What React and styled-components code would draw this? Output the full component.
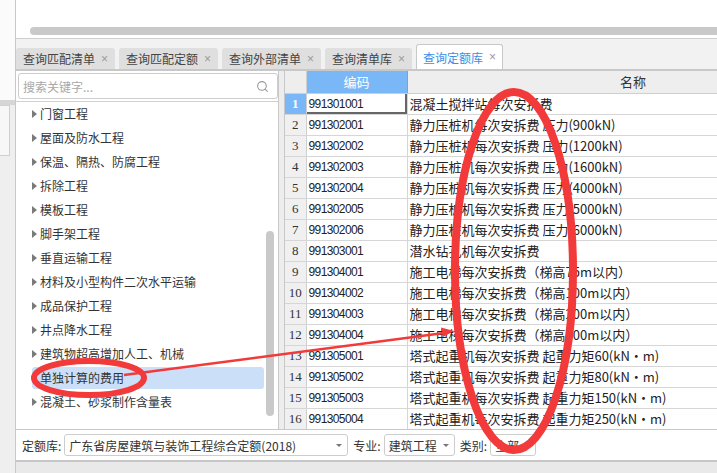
import styled, { createGlobalStyle } from "styled-components";
import { Search } from "lucide-react";

const GlobalStyle = createGlobalStyle`
  html, body {
    margin: 0;
    padding: 0;
    background: #f0f0f0;
  }
  * {
    box-sizing: border-box;
  }
  body {
    font-family: "Noto Sans CJK SC", "Liberation Sans", sans-serif;
    color: #333;
  }
`;

const Page = styled.div`
  position: relative;
  display: flex;
  width: 717px;
  height: 473px;
  overflow: hidden;
  background: #f0f0f0;
`;

const SideStrip = styled.div`
  display: flex;
  flex-direction: column;
  width: 16px;
  border-right: 1px solid #c8c8c8;
  background: #efefef;
`;

const SideTop = styled.div`
  height: 100px;
  background: #fbfbfb;
`;

const SideBand = styled.div`
  height: 5px;
  background: #d6d6d6;
`;

const SideBox = styled.div`
  height: 51px;
  width: 10px;
  border: 1px solid #cfcfcf;
  border-left: none;
  background: #f7f7f7;
`;

const Main = styled.div`
  flex: 1;
  display: flex;
  flex-direction: column;
  min-width: 0;
`;

const TopPanel = styled.div`
  height: 39px;
  background: #fff;
  border-bottom: 1px solid #cfcfcf;
  padding: 27px 0 0 14px;
`;

const HScroll = styled.div`
  height: 8px;
  background: #c9c9c9;
  border-radius: 4px 0 0 4px;
`;

const TabBar = styled.div`
  height: 30px;
  display: flex;
  align-items: flex-end;
  gap: 4px;
  background: #f2f2f2;
`;

const Tab = styled.div`
  display: flex;
  align-items: center;
  height: ${(p) => (p.$active ? "25px" : "21px")};
  padding: 0 ${(p) => (p.$active ? "6px" : "7px")};
  background: ${(p) => (p.$active ? "#fff" : "#dfdfdf")};
  border: ${(p) => (p.$active ? "1px solid #c8c8c8" : "none")};
  border-bottom: none;
  border-radius: 3px 3px 0 0;
  color: ${(p) => (p.$active ? "#3a8ee6" : "#444")};
  font-size: 12px;
  white-space: nowrap;
`;

const TabClose = styled.span`
  display: inline-block;
  width: 7px;
  margin-left: 6px;
  color: #9a9a9a;
  font-family: "Liberation Sans", sans-serif;
  font-size: 12px;
  line-height: 1;
`;

const Content = styled.div`
  display: flex;
  height: 360px;
  border-top: 2px solid #c8c8c8;
`;

const LeftPanel = styled.div`
  width: 263px;
  display: flex;
  flex-direction: column;
  background: #fff;
  border-right: 1px solid #c8c8c8;
`;

const SearchWrap = styled.div`
  padding: 2px 0 2px 2px;
  border-bottom: 1px solid #d0d0d0;
`;

const SearchBox = styled.div`
  display: flex;
  align-items: center;
  height: 26px;
  padding: 0 8px 0 4px;
  border: 1px solid #cdcdcd;
  border-radius: 3px;
  color: #a8a8a8;
  font-size: 12px;
`;

const SearchText = styled.span`
  flex: 1;
`;

const TreeArea = styled.div`
  flex: 1;
  display: flex;
`;

const TreeList = styled.div`
  flex: 1;
  display: flex;
  flex-direction: column;
  gap: 2px;
  padding: 1px 2px 0 16px;
`;

const TreeItem = styled.div`
  display: flex;
  align-items: center;
  height: 22px;
  border-radius: 3px;
  background: ${(p) => (p.$selected ? "#cbe0f8" : "transparent")};
  font-size: 12px;
  line-height: 22px;
  color: #333;
  white-space: nowrap;
`;

const Caret = styled.span`
  width: 5px;
  height: 8px;
  border-left: 5px solid ${(p) => (p.$hidden ? "transparent" : "#7a7a7a")};
  border-top: 4px solid transparent;
  border-bottom: 4px solid transparent;
  margin-right: 3px;
`;

const ScrollTrack = styled.div`
  width: 8px;
  margin-right: 4px;
`;

const ScrollThumb = styled.div`
  width: 8px;
  height: 185px;
  margin-top: 129px;
  border-radius: 4px;
  background: #c9c9c9;
`;

const Splitter = styled.div`
  width: 5px;
  background: #ededed;
`;

const TableWrap = styled.div`
  flex: 1;
  overflow: hidden;
  border-left: 1px solid #c8c8c8;
  background: #fff;
`;

const Grid = styled.table`
  border-collapse: collapse;
  table-layout: fixed;
  width: 574px;
`;

const HeadCell = styled.th`
  height: 22px;
  padding: 0;
  font-weight: normal;
  font-size: 13px;
  text-align: center;
  background: ${(p) => (p.$blue ? "#7ab7f6" : "#eeeeee")};
  color: ${(p) => (p.$blue ? "#fff" : "#333")};
  border-right: 1px solid ${(p) => (p.$blue ? "#6aa8ea" : "#d0d0d0")};
  border-bottom: 1px solid #cfcfcf;
`;

const RowHead = styled.td`
  height: 21px;
  padding: 0;
  text-align: center;
  font-family: "Liberation Serif", serif;
  font-size: 13px;
  font-weight: ${(p) => (p.$active ? "bold" : "normal")};
  background: ${(p) => (p.$active ? "#7ab7f6" : "#f0f0f0")};
  color: ${(p) => (p.$active ? "#fff" : "#333")};
  border-right: 1px solid #cfcfcf;
  border-bottom: 1px solid #d6d6d6;
`;

const CodeCell = styled.td`
  height: 21px;
  padding: 0 0 0 2px;
  font-family: "Liberation Sans", sans-serif;
  font-size: 12px;
  letter-spacing: -0.6px;
  color: #222;
  white-space: nowrap;
  border-right: 1px solid #d6d6d6;
  border-bottom: 1px solid #d6d6d6;
  box-shadow: ${(p) => (p.$selected ? "inset -2px -2px 0 #666" : "none")};
`;

const NameCell = styled.td`
  height: 21px;
  padding: 0 0 0 2px;
  font-size: 13px;
  color: #222;
  white-space: nowrap;
  overflow: hidden;
  border-bottom: 1px solid #d6d6d6;
`;

const BottomBar = styled.div`
  display: flex;
  align-items: center;
  height: 31px;
  padding-left: 6px;
  background: #fff;
  border-top: 1px solid #c8c8c8;
  font-size: 12px;
  color: #333;
`;

const Label = styled.span`
  margin-right: 3px;
  white-space: nowrap;
`;

const Select = styled.div`
  display: flex;
  align-items: center;
  width: ${(p) => p.$width}px;
  height: 22px;
  margin-right: 5px;
  padding: 0 5px 0 4px;
  border: 1px solid #cdcdcd;
  border-radius: 3px;
  white-space: nowrap;
`;

const SelectText = styled.span`
  flex: 1;
  overflow: hidden;
`;

const DropArrow = styled.span`
  width: 0;
  height: 0;
  border-top: 3px solid #777;
  border-left: 3px solid transparent;
  border-right: 3px solid transparent;
`;

const StatusStrip = styled.div`
  flex: 1;
  background: #e9e9e9;
  border-top: 2px solid #c6c6c6;
`;

const Overlay = styled.svg`
  position: absolute;
  left: 0;
  top: 0;
  pointer-events: none;
`;

const tabs = ["查询匹配清单", "查询匹配定额", "查询外部清单", "查询清单库", "查询定额库"];

const treeItems = [
  "门窗工程",
  "屋面及防水工程",
  "保温、隔热、防腐工程",
  "拆除工程",
  "模板工程",
  "脚手架工程",
  "垂直运输工程",
  "材料及小型构件二次水平运输",
  "成品保护工程",
  "井点降水工程",
  "建筑物超高增加人工、机械",
  "单独计算的费用",
  "混凝土、砂浆制作含量表",
];

const rows = [
  ["991301001", "混凝土搅拌站每次安拆费"],
  ["991302001", "静力压桩机每次安拆费 压力(900kN)"],
  ["991302002", "静力压桩机每次安拆费 压力(1200kN)"],
  ["991302003", "静力压桩机每次安拆费 压力(1600kN)"],
  ["991302004", "静力压桩机每次安拆费 压力(4000kN)"],
  ["991302005", "静力压桩机每次安拆费 压力(5000kN)"],
  ["991302006", "静力压桩机每次安拆费 压力(6000kN)"],
  ["991303001", "潜水钻孔机每次安拆费"],
  ["991304001", "施工电梯每次安拆费（梯高75m以内）"],
  ["991304002", "施工电梯每次安拆费（梯高100m以内）"],
  ["991304003", "施工电梯每次安拆费（梯高200m以内）"],
  ["991304004", "施工电梯每次安拆费（梯高300m以内）"],
  ["991305001", "塔式起重机每次安拆费 起重力矩60(kN·m)"],
  ["991305002", "塔式起重机每次安拆费 起重力矩80(kN·m)"],
  ["991305003", "塔式起重机每次安拆费 起重力矩150(kN·m)"],
  ["991305004", "塔式起重机每次安拆费 起重力矩250(kN·m)"],
];

function App() {
  return (
    <Page>
      <GlobalStyle />
      <SideStrip>
        <SideTop />
        <SideBand />
        <SideBox />
      </SideStrip>

      <Main>
        <TopPanel>
          <HScroll />
        </TopPanel>

        <TabBar>
          {tabs.map((t, i) => (
            <Tab key={t} $active={i === tabs.length - 1}>
              {t}
              <TabClose>×</TabClose>
            </Tab>
          ))}
        </TabBar>

        <Content>
          <LeftPanel>
            <SearchWrap>
              <SearchBox>
                <SearchText>搜索关键字...</SearchText>
                <Search size={13} color="#9a9a9a" strokeWidth={2} />
              </SearchBox>
            </SearchWrap>
            <TreeArea>
              <TreeList>
                {treeItems.map((name) => {
                  const selected = name === "单独计算的费用";
                  return (
                    <TreeItem key={name} $selected={selected}>
                      <Caret $hidden={selected} />
                      {name}
                    </TreeItem>
                  );
                })}
              </TreeList>
              <ScrollTrack>
                <ScrollThumb />
              </ScrollTrack>
            </TreeArea>
          </LeftPanel>

          <Splitter />

          <TableWrap>
            <Grid>
              <colgroup>
                <col style={{ width: 21 }} />
                <col style={{ width: 101 }} />
                <col style={{ width: 452 }} />
              </colgroup>
              <thead>
                <tr>
                  <HeadCell />
                  <HeadCell $blue>编码</HeadCell>
                  <HeadCell>名称</HeadCell>
                </tr>
              </thead>
              <tbody>
                {rows.map(([code, name], i) => (
                  <tr key={code}>
                    <RowHead $active={i === 0}>{i + 1}</RowHead>
                    <CodeCell $selected={i === 0}>{code}</CodeCell>
                    <NameCell>{name}</NameCell>
                  </tr>
                ))}
              </tbody>
            </Grid>
          </TableWrap>
        </Content>

        <BottomBar>
          <Label>定额库:</Label>
          <Select $width={284}>
            <SelectText>广东省房屋建筑与装饰工程综合定额(2018)</SelectText>
            <DropArrow />
          </Select>
          <Label>专业:</Label>
          <Select $width={71}>
            <SelectText>建筑工程</SelectText>
            <DropArrow />
          </Select>
          <Label>类别:</Label>
          <Select $width={46}>
            <SelectText>全部</SelectText>
            <DropArrow />
          </Select>
        </BottomBar>
        <StatusStrip />
      </Main>

      <Overlay width="717" height="473" viewBox="0 0 717 473">
        <ellipse cx="514" cy="271" rx="59" ry="179" fill="none" stroke="#f23a3a" strokeWidth="8" />
        <ellipse cx="89" cy="378" rx="55" ry="17" fill="none" stroke="#f23a3a" strokeWidth="6" />
        <line x1="124" y1="375" x2="444" y2="333" stroke="#f23a3a" strokeWidth="2.5" />
        <polygon points="454,331 441,327.5 443,337" fill="#f23a3a" />
      </Overlay>
    </Page>
  );
}

export default App;
